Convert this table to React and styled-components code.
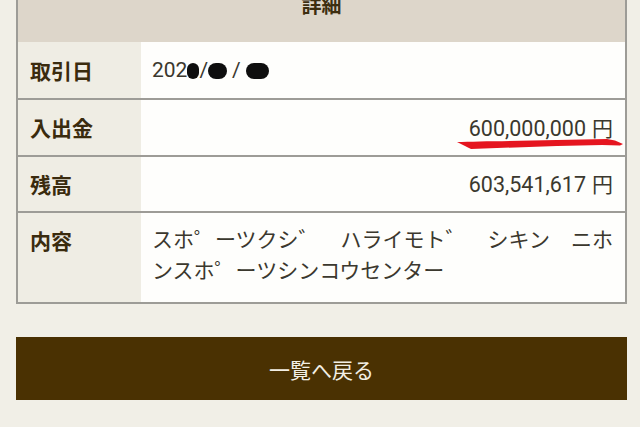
import React from 'react'
import styled, { createGlobalStyle } from 'styled-components'

const GlobalStyle = createGlobalStyle`
  html, body {
    margin: 0;
    padding: 0;
    background: #f1efe7;
    overflow: hidden;
  }
  body {
    font-family: Roboto, "Noto Sans CJK JP", sans-serif;
  }
`

const SCPage = styled.div`
  width: 640px;
  height: 427px;
  overflow: hidden;
  background: #f1efe7;
`

const SCInner = styled.div`
  margin: -34px 13px 0 16px;
  display: flex;
  flex-direction: column;
  gap: 33px;
`

const SCTable = styled.div`
  border: 2px solid #9d9c97;
  border-top: none;
  display: grid;
  grid-template-columns: 123px 1fr;
`

const SCHead = styled.div`
  grid-column: 1 / -1;
  height: 76px;
  background: #ddd6ca;
  display: flex;
  align-items: center;
  justify-content: center;
  font-family: "Noto Sans CJK JP", sans-serif;
  font-weight: 700;
  font-size: 20px;
  color: #3d2e10;
`

const SCLabel = styled.div`
  background: #efede4;
  padding: ${props => props['data-top'] ? '12px' : '0'} 0 0 12px;
  display: flex;
  align-items: ${props => props['data-top'] ? 'flex-start' : 'center'};
  height: ${props => props.h}px;
  box-sizing: border-box;
  border-bottom: ${props => props['data-last'] ? 'none' : '2px solid #9d9c97'};
  font-family: "Noto Sans CJK JP", sans-serif;
  font-weight: 700;
  font-size: 21px;
  line-height: 31px;
  color: #3a2b0e;
`

const SCValue = styled.div`
  position: relative;
  background: #fefefc;
  height: ${props => props.h}px;
  box-sizing: border-box;
  border-bottom: ${props => props['data-last'] ? 'none' : '2px solid #9d9c97'};
  padding: ${props => props['data-top'] ? '12px 6px 0 11px' : '0 12px 0 11px'};
  display: flex;
  align-items: ${props => props['data-top'] ? 'flex-start' : 'center'};
  justify-content: ${props => props['data-right'] ? 'flex-end' : 'flex-start'};
  font-family: Roboto, "Noto Sans CJK JP", sans-serif;
  font-size: 21px;
  line-height: 31px;
  color: #3b382e;
`

const SCAmount = styled.span`
  font-size: 21.5px;
`

const SCYen = styled.span`
  margin-left: 6px;
  font-size: 21px;
  font-family: "Noto Sans CJK JP", sans-serif;
`

const SCBlot = styled.span`
  display: inline-block;
  width: ${props => props.w}px;
  height: 16px;
  background: #0e0e0e;
  border-radius: 8px;
  vertical-align: -2px;
  margin: ${props => props.m};
`

const SCMarker = styled.svg`
  position: absolute;
  left: 316px;
  top: 38px;
  width: 168px;
  height: 12px;
`

const SCButton = styled.button`
  height: 63px;
  border: none;
  background: #4a3102;
  color: #f3efe5;
  font-family: "Noto Sans CJK JP", sans-serif;
  font-size: 21px;
  padding: 0;
  cursor: pointer;
`

const rows = [
  { label: '取引日', h: 58 },
  { label: '入出金', h: 57 },
  { label: '残高', h: 56 },
  { label: '内容', h: 89, top: true, last: true }
]

class App extends React.Component {
  value (i) {
    if (i === 0) {
      return (
        <span>
          202<SCBlot w={12} m="0 0 0 0" />/<SCBlot w={19} m="0 5px 0 0" />/<SCBlot w={23} m="0 0 0 5px" />
        </span>
      )
    }
    if (i === 1) {
      return (
        <SCAmount>600,000,000<SCYen>円</SCYen></SCAmount>
      )
    }
    if (i === 2) {
      return (
        <SCAmount>603,541,617<SCYen>円</SCYen></SCAmount>
      )
    }
    return (
      <span>スホ゜ーツクシ゛　ハライモト゛　シキン　ニホンスホ゜ーツシンコウセンター</span>
    )
  }

  render () {
    return (
      <SCPage>
        <GlobalStyle />
        <SCInner>
          <SCTable>
            <SCHead>詳細</SCHead>
            {rows.map((r, i) => (
              <React.Fragment key={r.label}>
                <SCLabel h={r.h} data-top={r.top} data-last={r.last}>{r.label}</SCLabel>
                <SCValue h={r.h} data-top={r.top} data-last={r.last} data-right={i === 1 || i === 2}>
                  {this.value(i)}
                  {i === 1 && (
                    <SCMarker viewBox="0 0 168 12">
                      <path
                        d="M0 4 C20 3.2, 60 3, 100 2 L150 1 L158 2.5 L166 6 L163 7.5 L145 7 L100 8 L40 10 L14 11 L8 8 Z"
                        fill="#e5151f"
                      />
                    </SCMarker>
                  )}
                </SCValue>
              </React.Fragment>
            ))}
          </SCTable>
          <SCButton>一覧へ戻る</SCButton>
        </SCInner>
      </SCPage>
    )
  }
}

export default App
